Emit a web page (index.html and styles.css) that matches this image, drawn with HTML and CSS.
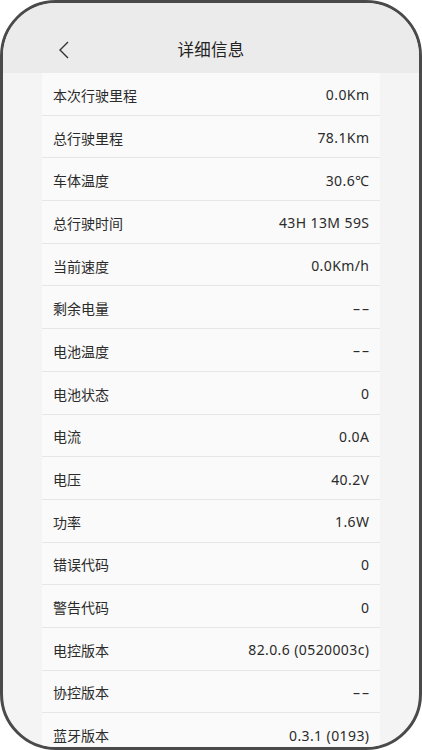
FILE: index.html
```html
<!DOCTYPE html>
<html lang="zh-CN">
<head>
    <meta charset="UTF-8">
    <meta name="viewport" content="width=device-width, initial-scale=1.0">
    <title>详细信息</title>
    <link rel="stylesheet" href="styles.css">
</head>
<body>
    <div class="phone">
        <header class="topbar">
            <span class="back">
                <svg width="14" height="20" viewBox="0 0 14 20"><path d="M11 2 L3 10 L11 18" fill="none" stroke="#333" stroke-width="1.4"/></svg>
            </span>
            <h1>详细信息</h1>
        </header>

        <ul class="info-list">
            <li><span>本次行驶里程</span><span class="val">0.0Km</span></li>
            <li><span>总行驶里程</span><span class="val">78.1Km</span></li>
            <li><span>车体温度</span><span class="val">30.6℃</span></li>
            <li><span>总行驶时间</span><span class="val">43H 13M 59S</span></li>
            <li><span>当前速度</span><span class="val">0.0Km/h</span></li>
            <li><span>剩余电量</span><span class="val dash">––</span></li>
            <li><span>电池温度</span><span class="val dash">––</span></li>
            <li><span>电池状态</span><span class="val">0</span></li>
            <li><span>电流</span><span class="val">0.0A</span></li>
            <li><span>电压</span><span class="val">40.2V</span></li>
            <li><span>功率</span><span class="val">1.6W</span></li>
            <li><span>错误代码</span><span class="val">0</span></li>
            <li><span>警告代码</span><span class="val">0</span></li>
            <li><span>电控版本</span><span class="val">82.0.6 (0520003c)</span></li>
            <li><span>协控版本</span><span class="val dash">––</span></li>
            <li><span>蓝牙版本</span><span class="val">0.3.1 (0193)</span></li>
        </ul>
    </div>
</body>
</html>
```

FILE: styles.css
```css
/* Tela de detalhes dentro da moldura do telefone */
body {
    margin: 0;
    background: #ffffff;
    font-family: 'Noto Sans', 'Noto Sans CJK SC', sans-serif;
    color: #2b2b2b;
}
.phone {
    width: 422px;
    height: 750px;
    box-sizing: border-box;
    border: 3px solid #4a4a4a;
    border-radius: 56px;
    overflow: hidden;
    background: #f4f4f4;
}
.topbar {
    height: 70px;
    background: #ebebeb;
    display: flex;
    align-items: center;
    justify-content: center;
    position: relative;
}
.topbar h1 {
    margin: 22px 0 0;
    font-size: 16.5px;
    font-weight: normal;
    letter-spacing: 0.3px;
    color: #222;
}
.back {
    position: absolute;
    left: 54px;
    top: 37px;
    display: flex;
}
.info-list {
    list-style: none;
    margin: 0 39px;
    padding: 0;
    background: #fafafa;
}
.info-list li {
    height: 42.7px;
    box-sizing: border-box;
    border-bottom: 1px solid #e6e6e6;
    display: flex;
    align-items: center;
    justify-content: space-between;
    padding: 2px 11px 0;
    font-size: 14px;
}
.val {
    letter-spacing: 0.4px;
    margin-right: -0.4px;
}
.dash {
    letter-spacing: 2px;
    margin-right: -2px;
}
```
